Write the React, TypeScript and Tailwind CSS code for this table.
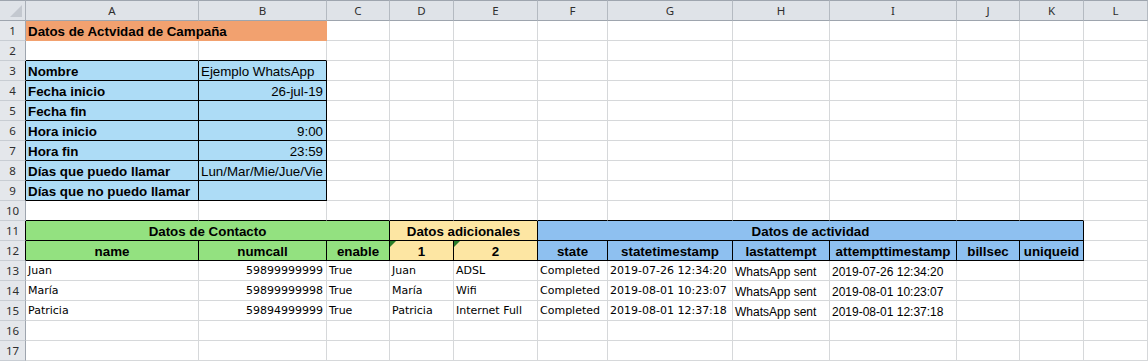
import React from 'react';

type Align = 'left' | 'right' | 'center';
type Face = 'label' | 'value' | 'data' | 'small';
type Edge = 'grid' | 'black' | 'fill';

interface CellSpec {
  text?: string;
  span?: 1 | 2 | 3 | 6;
  fill?: 'orange' | 'sky' | 'green' | 'sand' | 'blue';
  align?: Align;
  face?: Face;
  right?: Edge;
  bottom?: Edge;
  mark?: boolean;
}

const LETTERS = ['A', 'B', 'C', 'D', 'E', 'F', 'G', 'H', 'I', 'J', 'K', 'L'];

const FILL_BG = {
  orange: 'bg-[#f2a16f]',
  sky: 'bg-[#addcf6]',
  green: 'bg-[#93e180]',
  sand: 'bg-[#fde6a3]',
  blue: 'bg-[#8ec0f0]',
};

const FILL_EDGE = {
  orange: 'border-r-[#f2a16f] border-b-[#f2a16f]',
  sky: 'border-r-[#addcf6] border-b-[#addcf6]',
  green: 'border-r-[#93e180] border-b-[#93e180]',
  sand: 'border-r-[#fde6a3] border-b-[#fde6a3]',
  blue: 'border-r-[#8ec0f0] border-b-[#8ec0f0]',
};

const RIGHT = { grid: 'border-r-[#d6d8da]', black: 'border-r-black', fill: '' };
const BOTTOM = { grid: 'border-b-[#d6d8da]', black: 'border-b-black', fill: '' };

const SPAN = { 1: '', 2: 'col-span-2', 3: 'col-span-3', 6: 'col-span-6' };

const ALIGN = { left: 'justify-start pl-[2px]', right: 'justify-end pr-[3px]', center: 'justify-center' };

const FACE = {
  label: "font-['Liberation_Sans',Arial,sans-serif] font-bold text-[13.33px]",
  value: "font-['Liberation_Sans',Arial,sans-serif] text-[13.33px]",
  data: "font-['DejaVu_Sans',Tahoma,sans-serif] text-[11px]",
  small: "font-['Liberation_Sans',Arial,sans-serif] text-[12px]",
};

const blanks = (n: number, over: Partial<CellSpec> = {}): CellSpec[] =>
  Array.from({ length: n }, () => ({ ...over }));

const boxed = (text: string, fill: CellSpec['fill'], extra: Partial<CellSpec> = {}): CellSpec => ({
  text,
  fill,
  face: 'label',
  align: 'center',
  right: 'black',
  bottom: 'black',
  ...extra,
});

const info: [string, string, Align][] = [
  ['Nombre', 'Ejemplo WhatsApp', 'left'],
  ['Fecha inicio', '26-jul-19', 'right'],
  ['Fecha fin', '', 'right'],
  ['Hora inicio', '9:00', 'right'],
  ['Hora fin', '23:59', 'right'],
  ['Días que puedo llamar', 'Lun/Mar/Mie/Jue/Vie', 'left'],
  ['Días que no puedo llamar', '', 'left'],
];

const contacts = [
  ['Juan', '59899999999', 'ADSL', '2019-07-26 12:34:20'],
  ['María', '59899999998', 'Wifi', '2019-08-01 10:23:07'],
  ['Patricia', '59894999999', 'Internet Full', '2019-08-01 12:37:18'],
];

const rows: { cells: CellSpec[]; edge?: boolean }[] = [
  {
    cells: [
      { text: 'Datos de Actvidad de Campaña', span: 2, fill: 'orange', face: 'label', align: 'left', right: 'fill', bottom: 'fill' },
      ...blanks(10),
    ],
  },
  { cells: [...blanks(2, { bottom: 'black' }), ...blanks(10)] },
  ...info.map(([label, value, align]) => ({
    edge: true,
    cells: [
      boxed(label, 'sky', { align: 'left' }),
      boxed(value, 'sky', { face: 'value', align }),
      ...blanks(10),
    ],
  })),
  { cells: [...blanks(11, { bottom: 'black' }), ...blanks(1)] },
  {
    edge: true,
    cells: [
      boxed('Datos de Contacto', 'green', { span: 3 }),
      boxed('Datos adicionales', 'sand', { span: 2 }),
      boxed('Datos de actividad', 'blue', { span: 6 }),
      ...blanks(1),
    ],
  },
  {
    edge: true,
    cells: [
      boxed('name', 'green'),
      boxed('numcall', 'green'),
      boxed('enable', 'green'),
      boxed('1', 'sand', { mark: true }),
      boxed('2', 'sand', { mark: true }),
      ...['state', 'statetimestamp', 'lastattempt', 'attempttimestamp', 'billsec', 'uniqueid'].map((t) =>
        boxed(t, 'blue'),
      ),
      ...blanks(1),
    ],
  },
  ...contacts.map(([name, num, extra, stamp]) => ({
    cells: [
      { text: name, face: 'data' as Face },
      { text: num, face: 'data' as Face, align: 'right' as Align },
      { text: 'True', face: 'data' as Face },
      { text: name, face: 'data' as Face },
      { text: extra, face: 'data' as Face },
      { text: 'Completed', face: 'data' as Face },
      { text: stamp, face: 'data' as Face },
      { text: 'WhatsApp sent', face: 'small' as Face },
      { text: stamp, face: 'small' as Face },
      ...blanks(3),
    ],
  })),
  { cells: blanks(12) },
  { cells: blanks(12) },
];

function Cell({ spec }: { spec: CellSpec }) {
  const { text, span = 1, fill, align = 'left', face = 'data', right = 'grid', bottom = 'grid', mark } = spec;
  const edges = fill && right === 'fill' ? FILL_EDGE[fill] : `${RIGHT[right]} ${BOTTOM[bottom]}`;
  return (
    <div
      className={`relative flex items-center overflow-visible whitespace-nowrap border-r border-b pt-[2px] text-black ${SPAN[span]} ${
        fill ? FILL_BG[fill] : 'bg-white'
      } ${edges} ${ALIGN[align]} ${FACE[face]}`}
    >
      {mark && (
        <span className="absolute left-0 top-0 h-0 w-0 border-t-[6px] border-r-[6px] border-t-[#2a7d2a] border-r-transparent" />
      )}
      {text}
    </div>
  );
}

function Corner() {
  return (
    <div className="relative border-t border-r border-b border-t-[#9ea5ae] border-r-[#a9afb7] border-b-[#9ea5ae] bg-[#dfe3e8]">
      <svg width="26" height="20" viewBox="0 0 26 20" className="absolute left-0 top-0">
        <polygon points="10,16 22,16 22,4" fill="#c3c8cf" />
      </svg>
    </div>
  );
}

export default function App() {
  const head = "font-['Noto_Sans',Arial,sans-serif] text-[11.5px] text-[#2e2e2e]";
  return (
    <div className="h-[361px] w-[1148px] overflow-hidden bg-white">
      <div className="grid grid-cols-[26px_173px_128px_63px_64px_84px_70px_125px_97px_127px_63px_64px_1fr] grid-rows-[21px_repeat(17,20px)]">
        <Corner />
        {LETTERS.map((l) => (
          <div
            key={l}
            className={`flex items-center justify-center border-t border-r border-b border-t-[#9ea5ae] border-r-[#b4bac1] border-b-[#9ea5ae] bg-[#dfe3e8] ${head}`}
          >
            {l}
          </div>
        ))}
        {rows.map((row, i) => (
          <React.Fragment key={i}>
            <div
              className={`flex items-center justify-center border-r border-b border-b-[#c8cdd3] bg-[#e4e7eb] ${
                row.edge ? 'border-r-black' : 'border-r-[#9ea5ae]'
              } ${head}`}
            >
              {i + 1}
            </div>
            {row.cells.map((c, j) => (
              <Cell key={j} spec={c} />
            ))}
          </React.Fragment>
        ))}
      </div>
    </div>
  );
}
